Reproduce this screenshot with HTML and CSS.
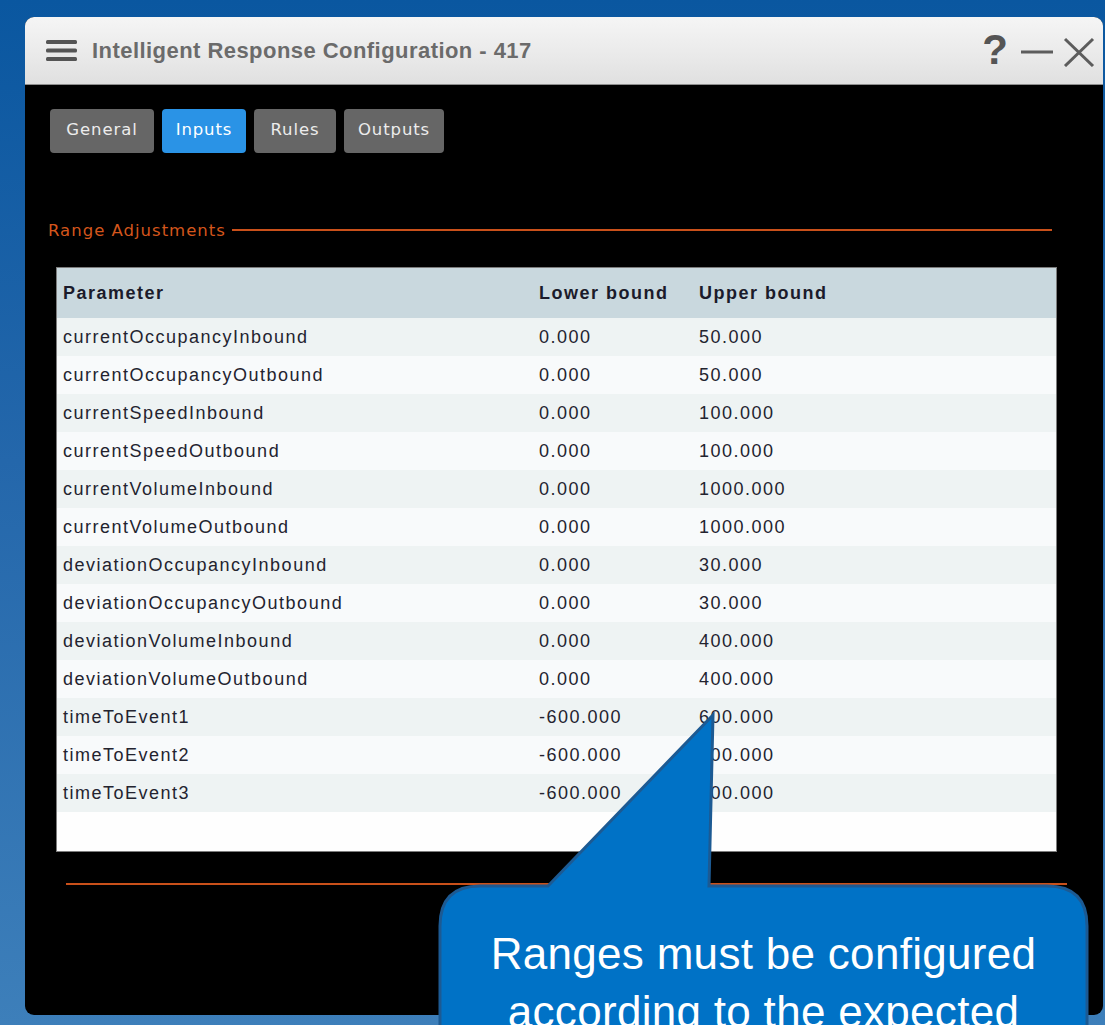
FILE: index.html
```html
<!DOCTYPE html>
<html lang="en">
<head>
<meta charset="utf-8">
<title>Intelligent Response Configuration - 417</title>
<link rel="stylesheet" href="styles.css">
</head>
<body>
<div class="window">
  <header class="titlebar">
    <svg class="menu-icon" width="31" height="22" viewBox="0 0 31 22" aria-hidden="true">
      <rect x="0" y="0" width="31" height="4" rx="1.5" fill="#555"/>
      <rect x="0" y="8.5" width="31" height="4" rx="1.5" fill="#555"/>
      <rect x="0" y="17" width="31" height="4" rx="1.5" fill="#555"/>
    </svg>
    <h1 class="title">Intelligent Response Configuration - 417</h1>
    <div class="controls">
      <span class="help">?</span>
      <svg class="minimize" width="34" height="30" viewBox="0 0 34 30" aria-hidden="true">
        <line x1="1" y1="16" x2="33" y2="16" stroke="#5c5c5c" stroke-width="3"/>
      </svg>
      <svg class="close" width="32" height="30" viewBox="0 0 32 30" aria-hidden="true">
        <line x1="2" y1="2" x2="30" y2="29" stroke="#5c5c5c" stroke-width="3"/>
        <line x1="30" y1="2" x2="2" y2="29" stroke="#5c5c5c" stroke-width="3"/>
      </svg>
    </div>
  </header>

  <main class="content">
    <nav class="tabs">
      <button class="tab tab-general">General</button>
      <button class="tab tab-inputs active">Inputs</button>
      <button class="tab tab-rules">Rules</button>
      <button class="tab tab-outputs">Outputs</button>
    </nav>

    <section class="range">
      <div class="legend">
        <span class="legend-text">Range Adjustments</span>
        <span class="legend-line"></span>
      </div>

      <div class="grid">
        <table>
          <thead>
            <tr><th class="c-param">Parameter</th><th class="c-low">Lower bound</th><th>Upper bound</th></tr>
          </thead>
          <tbody>
            <tr><td>currentOccupancyInbound</td><td>0.000</td><td>50.000</td></tr>
            <tr><td>currentOccupancyOutbound</td><td>0.000</td><td>50.000</td></tr>
            <tr><td>currentSpeedInbound</td><td>0.000</td><td>100.000</td></tr>
            <tr><td>currentSpeedOutbound</td><td>0.000</td><td>100.000</td></tr>
            <tr><td>currentVolumeInbound</td><td>0.000</td><td>1000.000</td></tr>
            <tr><td>currentVolumeOutbound</td><td>0.000</td><td>1000.000</td></tr>
            <tr><td>deviationOccupancyInbound</td><td>0.000</td><td>30.000</td></tr>
            <tr><td>deviationOccupancyOutbound</td><td>0.000</td><td>30.000</td></tr>
            <tr><td>deviationVolumeInbound</td><td>0.000</td><td>400.000</td></tr>
            <tr><td>deviationVolumeOutbound</td><td>0.000</td><td>400.000</td></tr>
            <tr><td>timeToEvent1</td><td>-600.000</td><td>600.000</td></tr>
            <tr><td>timeToEvent2</td><td>-600.000</td><td>600.000</td></tr>
            <tr><td>timeToEvent3</td><td>-600.000</td><td>600.000</td></tr>
          </tbody>
        </table>
      </div>
    </section>

    <div class="footer-rule"></div>
  </main>
</div>

<aside class="callout">
  <svg class="callout-shape" width="652" height="330" viewBox="0 0 652 330" aria-hidden="true">
    <path d="M 110,174 L 275,3 L 271,174 L 609,174 Q 649,174 649,214 L 649,330 L 2,330 L 2,214 Q 2,174 42,174 Z"
          fill="#0072c6" stroke="#1c5a93" stroke-width="3" stroke-linejoin="miter"/>
  </svg>
  <p class="callout-text">Ranges must be configured according to the expected</p>
</aside>
</body>
</html>
```

FILE: styles.css
```css
html, body {
  margin: 0;
  padding: 0;
}

body {
  width: 1105px;
  height: 1025px;
  overflow: hidden;
  position: relative;
  background: linear-gradient(180deg, #0a57a0 0%, #2467ab 45%, #3d7fba 100%);
  font-family: "Liberation Sans", Arial, sans-serif;
}

/* ---- window frame ---- */
.window {
  margin: 17px 2px 0 25px;
  height: 998px;
  background: #000;
  border-radius: 9px;
  overflow: hidden;
  display: flex;
  flex-direction: column;
}

.titlebar {
  height: 67px;
  flex: none;
  display: flex;
  align-items: center;
  padding: 0 8px 0 21px;
  background: linear-gradient(180deg, #f5f5f5 0%, #e9e9e9 60%, #e0e0e0 100%);
  border-bottom: 1px solid #8e8e8e;
}

.menu-icon {
  flex: none;
  margin-top: 1px;
}

.title {
  margin: 0 0 0 15px;
  font-size: 22px;
  font-weight: bold;
  letter-spacing: 0.45px;
  color: #6b6b6b;
}

.controls {
  margin-left: auto;
  display: flex;
  align-items: center;
}

.help {
  font-size: 42px;
  font-weight: bold;
  color: #555;
  line-height: 1;
  margin-right: 12px;
  margin-top: -2px;
}

.minimize {
  margin-right: 9px;
}

.close {
  margin-top: 3px;
}

/* ---- content ---- */
.content {
  flex: 1;
  padding: 24px 0 0 0;
}

.tabs {
  display: flex;
  gap: 8px;
  padding-left: 25px;
}

.tab {
  height: 44px;
  border: none;
  border-radius: 4px;
  background: #666;
  color: #ececec;
  font-family: "DejaVu Sans", Verdana, sans-serif;
  font-size: 16.5px;
  letter-spacing: 0.9px;
  padding: 0 0 4px 0;
  text-align: center;
}

.tab-general { width: 104px; }
.tab-inputs { width: 84px; }
.tab-rules { width: 82px; }
.tab-outputs { width: 100px; }

.tab.active {
  background: #2a93e6;
  color: #fff;
}

.legend {
  display: flex;
  align-items: center;
  margin: 67px 51px 0 23px;
  height: 20px;
}

.legend-text {
  font-family: "DejaVu Sans", Verdana, sans-serif;
  font-size: 16.5px;
  letter-spacing: 1px;
  color: #d4561c;
}

.legend-line {
  flex: 1;
  height: 2px;
  margin-left: 6px;
  background: #c9501a;
}

/* ---- parameter grid ---- */
.grid {
  margin: 27px 46px 0 31px;
  height: 585px;
  box-sizing: border-box;
  border: 1px solid #7c7c7c;
  background: #fefefe;
}

table {
  width: 100%;
  border-collapse: collapse;
  font-size: 18px;
  letter-spacing: 1.5px;
  color: #23232f;
}

th {
  height: 50px;
  padding: 0 0 0 6px;
  background: #c9d8de;
  text-align: left;
  font-weight: bold;
  color: #1b1b2b;
}

th.c-param { width: 470px; }
th.c-low { width: 154px; }

td {
  height: 38px;
  padding: 0 0 0 6px;
}

tbody tr:nth-child(odd) td { background: #eef3f3; }
tbody tr:nth-child(even) td { background: #f8fafb; }

.footer-rule {
  margin: 31px 36px 0 41px;
  height: 2px;
  background: #c9501a;
}

/* ---- annotation bubble ---- */
.callout {
  position: absolute;
  left: 438px;
  top: 712px;
  width: 652px;
  height: 330px;
  margin: 0;
}

.callout-shape {
  position: absolute;
  left: 0;
  top: 0;
}

.callout-text {
  position: absolute;
  left: 2px;
  top: 213px;
  width: 647px;
  margin: 0;
  text-align: center;
  color: #fff;
  font-family: "Liberation Sans", Arial, sans-serif;
  font-size: 44px;
  letter-spacing: 0.3px;
  line-height: 58px;
}
```
